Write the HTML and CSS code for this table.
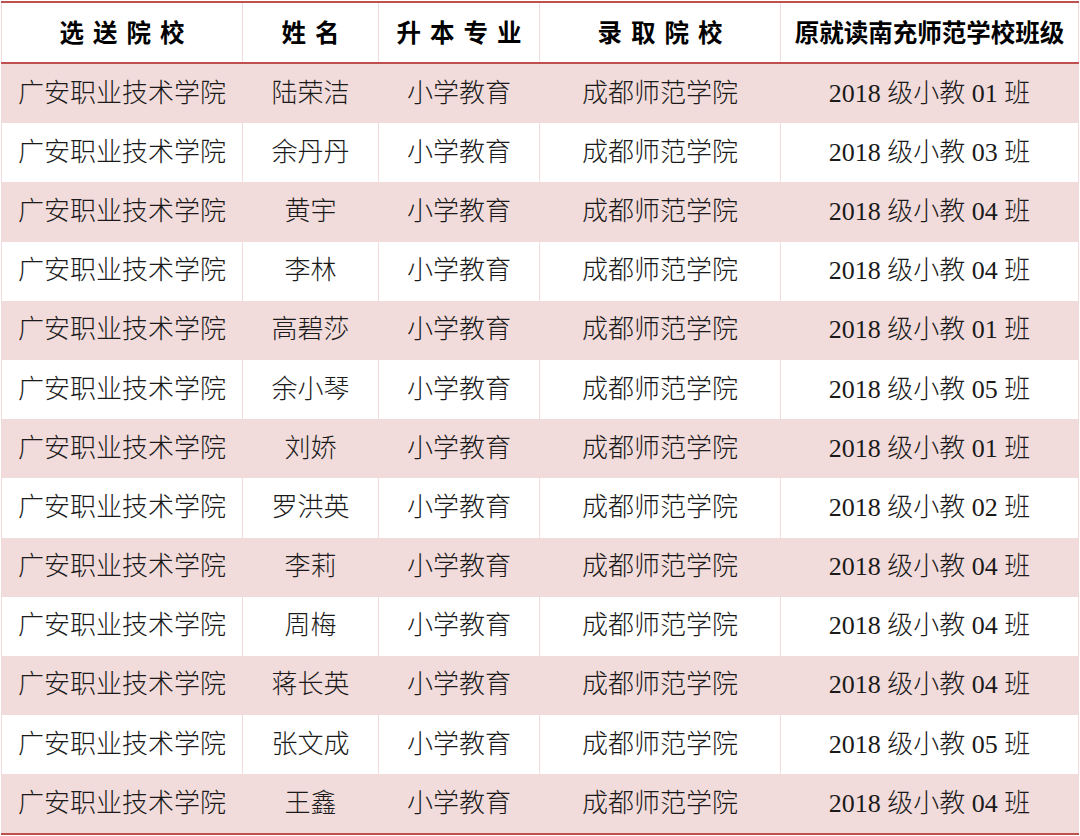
FILE: index.html
```html
<!DOCTYPE html>
<html lang="zh-CN">
<head>
<meta charset="utf-8">
<link rel="stylesheet" href="styles.css">
</head>
<body>
<table class="roster">
  <colgroup>
    <col class="c1"><col class="c2"><col class="c3"><col class="c4"><col class="c5">
  </colgroup>
  <thead>
    <tr>
      <th class="sp">选送院校</th>
      <th class="sp">姓名</th>
      <th class="sp">升本专业</th>
      <th class="sp">录取院校</th>
      <th>原就读南充师范学校班级</th>
    </tr>
  </thead>
  <tbody>
    <tr class="alt"><td>广安职业技术学院</td><td>陆荣洁</td><td>小学教育</td><td>成都师范学院</td><td>2018 级小教 01 班</td></tr>
    <tr><td>广安职业技术学院</td><td>余丹丹</td><td>小学教育</td><td>成都师范学院</td><td>2018 级小教 03 班</td></tr>
    <tr class="alt"><td>广安职业技术学院</td><td>黄宇</td><td>小学教育</td><td>成都师范学院</td><td>2018 级小教 04 班</td></tr>
    <tr><td>广安职业技术学院</td><td>李林</td><td>小学教育</td><td>成都师范学院</td><td>2018 级小教 04 班</td></tr>
    <tr class="alt"><td>广安职业技术学院</td><td>高碧莎</td><td>小学教育</td><td>成都师范学院</td><td>2018 级小教 01 班</td></tr>
    <tr><td>广安职业技术学院</td><td>余小琴</td><td>小学教育</td><td>成都师范学院</td><td>2018 级小教 05 班</td></tr>
    <tr class="alt"><td>广安职业技术学院</td><td>刘娇</td><td>小学教育</td><td>成都师范学院</td><td>2018 级小教 01 班</td></tr>
    <tr><td>广安职业技术学院</td><td>罗洪英</td><td>小学教育</td><td>成都师范学院</td><td>2018 级小教 02 班</td></tr>
    <tr class="alt"><td>广安职业技术学院</td><td>李莉</td><td>小学教育</td><td>成都师范学院</td><td>2018 级小教 04 班</td></tr>
    <tr><td>广安职业技术学院</td><td>周梅</td><td>小学教育</td><td>成都师范学院</td><td>2018 级小教 04 班</td></tr>
    <tr class="alt"><td>广安职业技术学院</td><td>蒋长英</td><td>小学教育</td><td>成都师范学院</td><td>2018 级小教 04 班</td></tr>
    <tr><td>广安职业技术学院</td><td>张文成</td><td>小学教育</td><td>成都师范学院</td><td>2018 级小教 05 班</td></tr>
    <tr class="alt"><td>广安职业技术学院</td><td>王鑫</td><td>小学教育</td><td>成都师范学院</td><td>2018 级小教 04 班</td></tr>
  </tbody>
</table>
</body>
</html>
```
FILE: styles.css
```css
html, body {
  margin: 0;
  padding: 0;
  background: #ffffff;
}
.roster {
  margin: 1px 2px 0 1px;
  width: 1077px;
  border-collapse: collapse;
  table-layout: fixed;
  font-family: "Liberation Serif", "Noto Sans CJK SC", serif;
  color: #1a1a1a;
  border-top: 2px solid #c0504d;
  border-bottom: 2px solid #c0504d;
  border-left: 1px solid #f2dcdb;
}
.c1 { width: 241px; }
.c2 { width: 136px; }
.c3 { width: 161px; }
.c4 { width: 241px; }
.c5 { width: 298px; }
.roster th {
  height: 58px;
  padding: 0 0 1px 0;
  line-height: 1;
  font-family: "Noto Sans CJK SC", sans-serif;
  font-weight: 700;
  font-size: 24.5px;
  color: #000000;
  text-align: center;
  vertical-align: middle;
  white-space: nowrap;
  border-bottom: 2px solid #c0504d;
  border-left: 1px solid #f2dcdb;
  border-right: 1px solid #f2dcdb;
}
.roster th.sp {
  letter-spacing: 9px;
  text-indent: 9px;
}
.roster td {
  height: 59.2px;
  padding: 0;
  line-height: 1;
  font-size: 26px;
  font-weight: 300;
  text-align: center;
  vertical-align: middle;
  white-space: nowrap;
  border-left: 1px solid #f2dcdb;
  border-right: 1px solid #f2dcdb;
}
.roster tr.alt td {
  background: #f2dcdb;
}
```
